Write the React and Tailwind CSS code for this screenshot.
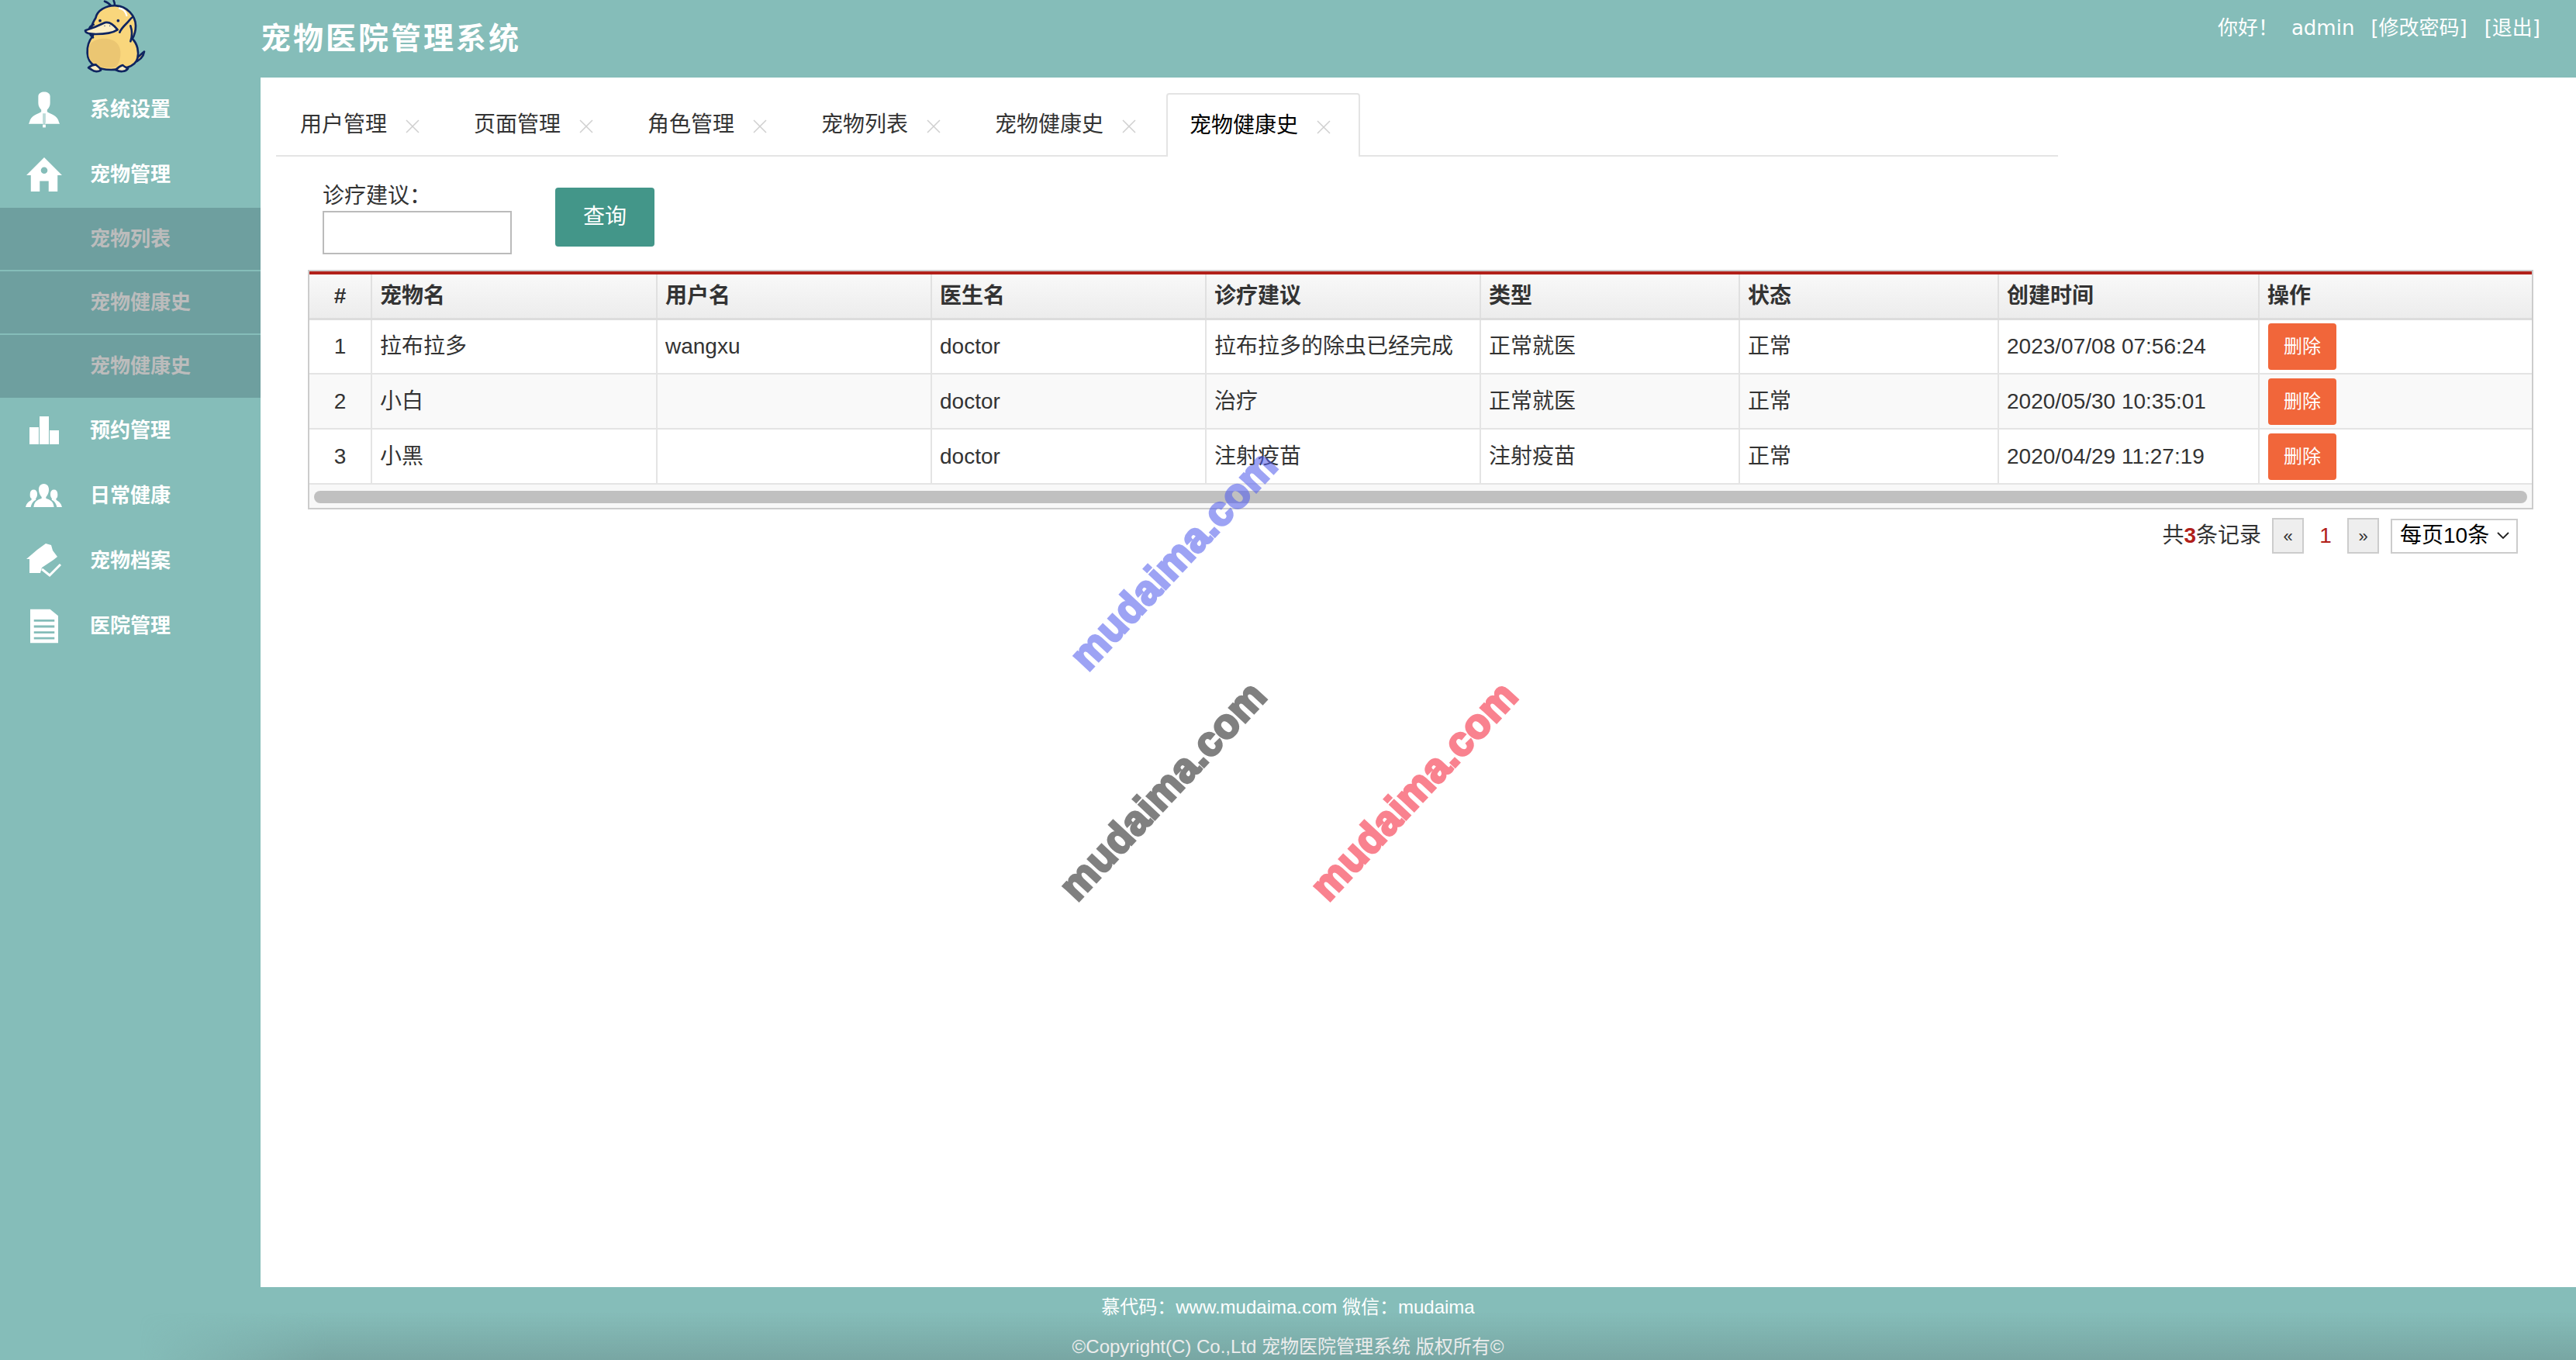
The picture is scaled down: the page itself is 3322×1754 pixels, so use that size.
const FONT = "font-['Liberation_Sans','Noto_Sans_CJK_SC',sans-serif]";

function Logo() {
  return (
    <svg viewBox="0 0 300 300" className="w-[100px] h-[100px]">
      <g stroke="#0f2560" strokeWidth="8" strokeLinecap="round" strokeLinejoin="round">
        <path d="M105 5q15 5 25 18M140 3q5 10 3 22" fill="none" />
        <path d="M212 238C230 225 245 210 258 200C255 220 240 235 215 243Z" fill="#eec56f" />
        <path d="M70 70C75 40 110 20 150 22C190 24 225 60 225 100C225 125 218 140 212 150C232 170 238 200 232 225C225 260 170 270 130 270C80 270 40 250 38 205C36 175 50 150 60 138C50 125 50 100 70 70Z" fill="#f9d67c" />
      </g>
      <path d="M50 170C70 145 130 140 155 170C175 195 165 240 150 258C110 268 60 260 45 225C40 205 42 185 50 170Z" fill="#ebc672" />
      <path d="M162 32C175 34 186 45 190 60" stroke="#fff" strokeWidth="7" fill="none" strokeLinecap="round" />
      <g stroke="#0f2560" strokeWidth="8" strokeLinecap="round" strokeLinejoin="round">
        <path d="M215 65C205 70 200 80 190 90C180 100 168 112 163 125M205 160C212 140 212 120 205 100M62 95C50 100 45 108 45 115M50 135L60 145" fill="none" />
        <path d="M30 118C55 110 80 100 100 90C115 82 135 90 155 115C135 128 100 132 70 132C50 132 30 130 30 118Z" fill="#fdeec4" />
        <path d="M42 262C50 255 60 250 70 250C80 258 90 265 90 272C80 278 65 278 55 270ZM148 270C155 262 165 255 175 252C180 258 190 262 195 265C185 278 165 280 148 270Z" fill="#fdeec4" />
      </g>
      <circle cx="87" cy="80" r="5.500" fill="#0f2560" />
      <circle cx="157" cy="80" r="5.500" fill="#0f2560" />
      <circle cx="105" cy="100" r="2" fill="#0f2560" />
      <circle cx="125" cy="100" r="2" fill="#0f2560" />
    </svg>
  );
}

const UserIcon = () => (
  <svg viewBox="0 0 44 48" className="w-[42px] h-[47px]" fill="#fff">
    <path d="M14 6c0-4 4-6 8-6s8 2 8 6v9c0 4-2 7-4 9v3c4 3 14 4 16 14l1 2H1l1-2c2-10 12-11 16-14v-3c-2-2-4-5-4-9z" />
    <path d="M20 29h4v12l-2 5-2-5z" fill="#85bdb9" opacity=".55" />
    <path d="M20 44h4v4h-4z" />
  </svg>
);
const HomeIcon = () => (
  <svg viewBox="0 0 48 46" className="w-[48px] h-[44px]" fill="#fff">
    <path fillRule="evenodd" d="M24 0l24 24h-6v22H30V32H18v14H6V24H0zM24 13a4.500 4.500 0 100 9 4.500 4.500 0 000-9z" />
  </svg>
);
const BarsIcon = () => (
  <svg viewBox="0 0 38 36" className="w-[38px] h-[36px]" fill="#fff">
    <path d="M0 14h12v22H0zM13 0h12v36H13zM26 18h12v18H26z" />
  </svg>
);
const TeamIcon = () => (
  <svg viewBox="0 0 50 32" className="w-[47px] h-[30px]" fill="#fff">
    <path d="M25 0c5 0 7 4 7 8s-2 8-4 10v2c5 2 10 3 11 12H11c1-9 6-10 11-12v-2c-2-2-4-6-4-10s2-8 7-8z" />
    <path d="M11 8c3 0 5 2 5 6 0 3-1 5-2 6v2c-4 2-6 5-7 10H0c1-6 5-8 8-10v-2c-2-1-2-3-2-6 0-4 2-6 5-6zM39 8c3 0 5 2 5 6 0 3 0 5-2 6v2c3 2 7 4 8 10h-7c-1-5-3-8-7-10v-2c-1-1-2-3-2-6 0-4 2-6 5-6z" />
  </svg>
);
const HouseCheckIcon = () => (
  <svg viewBox="0 0 45 44" className="w-[45px] h-[44px]" fill="#fff">
    <path d="M25 0L32 2L34 9L40 17L35 21L20 31L18 38H4V20H0L14 8Z" />
    <path d="M20 33L30 41L44 27" fill="none" stroke="#fff" strokeWidth="3" />
  </svg>
);
const DocIcon = () => (
  <svg viewBox="0 0 38 46" className="w-[36px] h-[45px]" fill="#fff">
    <path fillRule="evenodd" d="M0 0h27l11 9v37H0zM5 14v3h28v-3zM5 22v3h28v-3zM5 30v3h28v-3zM5 38v3h28v-3z" />
  </svg>
);

function MenuItem({ icon, label }) {
  return (
    <div className="h-[84px] flex items-center">
      <div className="w-[116px] pl-[27px] pr-[30px] flex justify-center shrink-0">{icon}</div>
      <span className="text-[26px] font-bold text-white">{label}</span>
    </div>
  );
}

function SubItem({ label, last }) {
  return (
    <div className={`flex items-center pl-[116px] text-[26px] font-bold text-[#bcbcbc] bg-[#6e9f9f] ${last ? "h-[81px]" : "h-[82px] border-b-2 border-[#85bdb9]"}`}>
      {label}
    </div>
  );
}

function Tab({ label, active }) {
  return (
    <div className={`flex items-center ${active ? "bg-white border-2 border-b-0 border-[#e4e4e4] rounded-t-[4px] pl-[28px] pr-[36px] -mb-[2px] h-[82px] text-black" : "h-[80px] pt-[2px] pl-[31px] pr-[39px] text-[#333]"}`}>
      <span className="text-[28px]">{label}</span>
      <svg viewBox="0 0 18 18" className="w-[18px] h-[18px] ml-[24px] mt-[4px]" stroke="#cfcfcf" strokeWidth="1.500" fill="none">
        <path d="M1 1l16 16M17 1L1 17" />
      </svg>
    </div>
  );
}

const rows = [
  ["1", "拉布拉多", "wangxu", "doctor", "拉布拉多的除虫已经完成", "正常就医", "正常", "2023/07/08 07:56:24"],
  ["2", "小白", "", "doctor", "治疗", "正常就医", "正常", "2020/05/30 10:35:01"],
  ["3", "小黑", "", "doctor", "注射疫苗", "注射疫苗", "正常", "2020/04/29 11:27:19"],
];
const heads = ["#", "宠物名", "用户名", "医生名", "诊疗建议", "类型", "状态", "创建时间", "操作"];

function Watermark({ className, children }) {
  return (
    <div className={`absolute pointer-events-none rotate-[-47deg] whitespace-nowrap text-[53px] tracking-[0.5px] leading-none font-bold font-['Liberation_Sans',sans-serif] ${className}`}>
      {children}
    </div>
  );
}

export default function App() {
  return (
    <div className={`relative w-[3322px] h-[1754px] overflow-hidden flex bg-[#85bdb9] ${FONT}`}>
      <aside className="w-[336px] shrink-0 flex flex-col">
        <div className="h-[99px] pl-[100px] flex items-start"><Logo /></div>
        <MenuItem icon={<UserIcon />} label="系统设置" />
        <MenuItem icon={<HomeIcon />} label="宠物管理" />
        <div className="mt-[1px]">
          <SubItem label="宠物列表" />
          <SubItem label="宠物健康史" />
          <SubItem label="宠物健康史" last />
        </div>
        <MenuItem icon={<BarsIcon />} label="预约管理" />
        <MenuItem icon={<TeamIcon />} label="日常健康" />
        <MenuItem icon={<HouseCheckIcon />} label="宠物档案" />
        <MenuItem icon={<DocIcon />} label="医院管理" />
      </aside>

      <div className="flex-1 flex flex-col min-w-0">
        <header className="h-[100px] shrink-0 flex text-white">
          <h1 className="text-[39px] leading-[100px] font-bold tracking-[3px]">宠物医院管理系统</h1>
          <div className="ml-auto pr-[46px] pt-[18px] flex items-start text-[26px] leading-[36px] font-['DejaVu_Sans','Noto_Sans_CJK_SC',sans-serif]">
            <span>你好！</span>
            <span className="ml-[17px]">admin</span>
            <span className="ml-[21px]">[修改密码]</span>
            <span className="ml-[22px]">[退出]</span>
          </div>
        </header>

        <main className="flex-1 bg-white pl-[20px]">
          <div className="w-[2298px] h-[102px] flex items-end border-b-2 border-[#e4e4e4]">
            <Tab label="用户管理" />
            <Tab label="页面管理" />
            <Tab label="角色管理" />
            <Tab label="宠物列表" />
            <Tab label="宠物健康史" />
            <Tab label="宠物健康史" active />
          </div>

          <div className="flex items-start pl-[60px] pt-[40px] h-[146px]">
            <div className="w-[300px] flex flex-col">
              <label className="text-[28px] leading-[22px] text-[#333]">诊疗建议：</label>
              <input className="w-[244px] h-[56px] mt-[8px] border-2 border-[#bbb] bg-white" />
            </div>
            <button className="w-[128px] h-[76px] rounded-[4px] bg-[#439689] text-white text-[28px]">查询</button>
          </div>

          <div className="ml-[41px] w-[2870px] border-2 border-[#ccc]">
            <table className="w-full table-fixed border-collapse border-t-4 border-t-[#b1201a] text-[28px] text-[#333]">
              <colgroup>
                <col className="w-[80px]" />
                <col className="w-[368px]" />
                <col className="w-[354px]" />
                <col className="w-[354px]" />
                <col className="w-[354px]" />
                <col className="w-[334px]" />
                <col className="w-[334px]" />
                <col className="w-[336px]" />
                <col />
              </colgroup>
              <thead>
                <tr className="h-[59px] bg-gradient-to-b from-[#f9f9f9] to-[#ececec]">
                  {heads.map((h, i) => (
                    <th key={h} className={`font-bold border-b-[3px] border-b-[#dcdcdc] border-l-2 border-l-[#e0e0e0] first:border-l-0 ${i === 0 ? "text-center" : "text-left pl-[10px]"}`}>{h}</th>
                  ))}
                </tr>
              </thead>
              <tbody>
                {rows.map((r, i) => (
                  <tr key={r[0]} className={`h-[71px] border-b-2 border-[#e4e4e4] ${i === 1 ? "bg-[#f9f9f9]" : "bg-white"}`}>
                    {r.map((c, j) => (
                      <td key={j} className={`border-l-2 border-l-[#e4e4e4] first:border-l-0 ${j === 0 ? "text-center" : "pl-[10px]"}`}>{c}</td>
                    ))}
                    <td className="border-l-2 border-l-[#e4e4e4] pl-[11px]">
                      <button className="block w-[88px] h-[60px] rounded-[4px] bg-[#f1663a] text-white text-[24px]">删除</button>
                    </td>
                  </tr>
                ))}
              </tbody>
            </table>
            <div className="h-[30px] bg-[#f8f8f8] px-[6px] pt-[8px]">
              <div className="h-[16px] rounded-full bg-[#c0c0c0]" />
            </div>
          </div>

          <div className="w-[2891px] flex items-center justify-end mt-[11px] text-[28px] text-[#333]">
            <span>共<b className="text-[#b1201a]">3</b>条记录</span>
            <span className="ml-[14px] w-[41px] h-[46px] flex items-center justify-center bg-[#eee] border-2 border-[#ccc] text-[22px]">«</span>
            <span className="w-[56px] text-center text-[#b1201a]">1</span>
            <span className="w-[41px] h-[46px] flex items-center justify-center bg-[#eee] border-2 border-[#ccc] text-[22px]">»</span>
            <div className="ml-[15px] w-[164px] h-[45px] flex items-center border-2 border-[#ccc] pl-[10px] text-black">
              <span>每页10条</span>
              <svg viewBox="0 0 16 10" className="w-[16px] h-[10px] ml-[10px]" stroke="#222" strokeWidth="1.800" fill="none"><path d="M1 1l7 7 7-7" /></svg>
            </div>
          </div>
        </main>

        <div className="h-[94px] shrink-0" />
      </div>

      <footer className="absolute left-0 bottom-0 w-full h-[94px] text-center text-[24px] text-white">
        <div className="absolute inset-0 bg-gradient-to-b from-transparent from-[35%] to-[#78a6a3] [mask-image:linear-gradient(to_right,transparent_180px,black_420px)]" />
        <p className="relative h-[51px] leading-[52px]">慕代码：www.mudaima.com 微信：mudaima</p>
        <p className="relative leading-[51px] text-[#ececec]">©Copyright(C) Co.,Ltd 宠物医院管理系统 版权所有©</p>
      </footer>

      <Watermark className="left-[1332px] top-[696px] text-[#515ded] opacity-[.56] [-webkit-text-stroke:3px_#515ded]">mudaima.com</Watermark>
      <Watermark className="left-[1318px] top-[993px] text-[#808080] [-webkit-text-stroke:3px_#808080]">mudaima.com</Watermark>
      <Watermark className="left-[1642px] top-[993px] text-[#f9828f] [-webkit-text-stroke:3px_#f9828f]">mudaima.com</Watermark>
    </div>
  );
}
